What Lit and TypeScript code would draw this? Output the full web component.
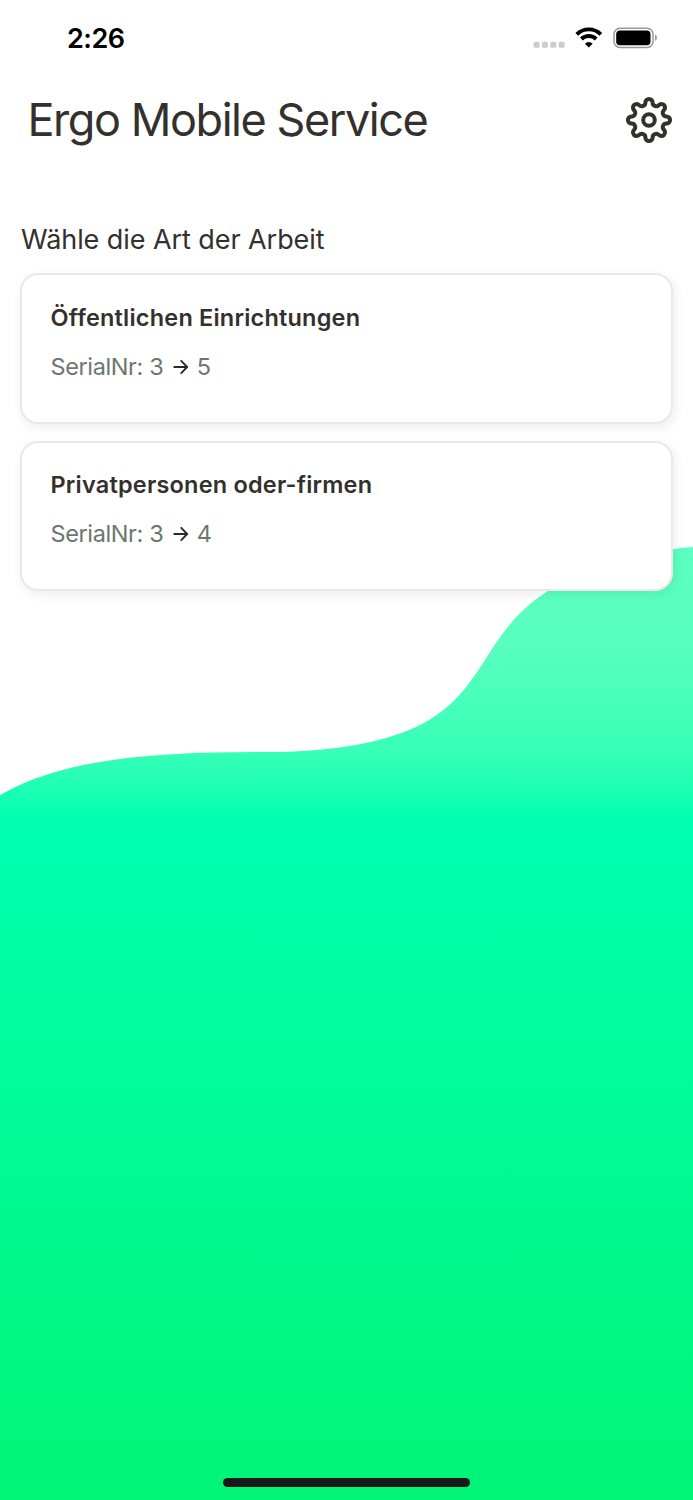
import { LitElement, html, css, svg } from "lit";
import { customElement, property } from "lit/decorators.js";

@customElement("work-card")
class WorkCard extends LitElement {
  @property() heading = "";
  @property() from = "";
  @property() to = "";
  static styles = css`
    :host { display: block; box-sizing: border-box; height: 150.5px; border: 2px solid #e9e9e9; border-radius: 18px;
      background: #fff; box-shadow: 2px 4px 12px rgba(0, 0, 0, 0.07); padding: 26.6px 28px; }
    .title { font-size: 23.5px; line-height: 32px; font-weight: 600; color: #34302d; white-space: nowrap; letter-spacing: 0.2px; padding-left: 0.5px; }
    .serial { display: flex; align-items: center; margin-top: 17px; line-height: 32px; font-size: 23.5px; color: #6c776f; white-space: nowrap; letter-spacing: -0.38px; padding-left: 0.5px; }
    .arrow { width: 16px; height: 16px; margin: 0 8px 0 9.5px; }
  `;
  render() {
    return html`<div class="title">${this.heading}</div>
      <div class="serial"><span>SerialNr: ${this.from}</span>
        <svg class="arrow" viewBox="0 0 16 16" fill="none" stroke="#2c2926" stroke-width="1.8">
          <path d="M1.2 8H14M8.2 1.8 14.2 8 8.2 14.2" stroke-linecap="round" stroke-linejoin="round"/></svg>
        <span>${this.to}</span></div>`;
  }
}

/* Eight round teeth joined by round valleys, all tangent arcs of one radius. */
function gearPath(): string {
  const r = 3.6;
  const tooth = 17.6;
  const valley = 18.8;
  const step = Math.PI / 4;
  const at = (radius: number, angle: number) => [24 + radius * Math.sin(angle), 24 - radius * Math.cos(angle)];
  const join = (toothAngle: number, valleyAngle: number) => {
    const a = at(tooth, toothAngle);
    const b = at(valley, valleyAngle);
    return `${((a[0] + b[0]) / 2).toFixed(2)} ${((a[1] + b[1]) / 2).toFixed(2)}`;
  };
  let d = `M${join(0, -step / 2)}`;
  for (let i = 0; i < 8; i++) {
    const t = i * step;
    d += `A${r} ${r} 0 1 1 ${join(t, t + step / 2)}A${r} ${r} 0 0 0 ${join(t + step, t + step / 2)}`;
  }
  return d + "Z";
}

@customElement("app-root")
class AppRoot extends LitElement {
  static styles = css`
    :host { display: block; position: relative; box-sizing: border-box; width: 693px; height: 1500px; overflow: hidden;
      background: #fff; font-family: Inter, "Liberation Sans", sans-serif; color: #34302d; }
    .wave { position: absolute; inset: 0; width: 693px; height: 1500px; }
    .screen { position: relative; height: 100%; display: flex; flex-direction: column; }
    .status { display: flex; justify-content: space-between; align-items: center; height: 76px; padding: 0 35px 0 67px; box-sizing: border-box; }
    .time { font-size: 27px; font-weight: 600; color: #000; line-height: 32px; letter-spacing: -0.5px; padding-top: 2px; }
    .indicators { width: 126px; height: 30px; }
    .header { display: flex; justify-content: space-between; align-items: center; height: 87px; padding: 0 20px 0 27.5px; }
    .name { margin: 0; font-size: 45px; font-weight: 400; line-height: 56px; white-space: nowrap; letter-spacing: -1.44px; }
    .gear { width: 48px; height: 48px; }
    .label { margin: 59px 0 15px 21px; line-height: 36px; font-size: 27px; white-space: nowrap; letter-spacing: -0.07px; }
    .cards { display: flex; flex-direction: column; gap: 17px; padding: 0 20px; }
    .home { width: 247.5px; height: 8.5px; border-radius: 5px; background: #191919; margin: auto auto 13.5px; }
  `;
  render() {
    return html`
      <svg class="wave" viewBox="0 0 693 1500">
        <defs><linearGradient id="fill" gradientUnits="userSpaceOnUse" x1="0" y1="547" x2="0" y2="1500">
          <stop offset="0" stop-color="#5bffc0"/><stop offset="0.1" stop-color="#59ffbe"/>
          <stop offset="0.213" stop-color="#38ffb7"/><stop offset="0.25" stop-color="#20ffb4"/>
          <stop offset="0.287" stop-color="#00ffb1"/><stop offset="0.35" stop-color="#00ffac"/>
          <stop offset="1" stop-color="#00f576"/></linearGradient></defs>
        <path fill="url(#fill)" d="M0 795C66 757 160 752 266 752C324 752 388 745 430 719.5C455 704 468 686 483 663C501 635 515 612 548 591C585 563 640 551 693 547V1500H0Z"/>
      </svg>
      <div class="screen">
        <div class="status">
          <span class="time">2:26</span>
          <svg class="indicators" viewBox="532 23 126 30">
            ${[533.6, 542, 550.3, 558.6].map((x) => svg`<rect x=${x} y="41.8" width="6" height="6" rx="1.6" fill="#cbcbcb"/>`)}
            <g fill="none" stroke="#000" stroke-width="3.9">
              <path d="M576.8 34.3A17 17 0 0 1 600.8 34.3"/>
              <path d="M581.4 39A10.5 10.5 0 0 1 596.2 39"/></g>
            <path d="M588.8 47.6 584.9 43.7A5.6 5.6 0 0 1 592.7 43.7Z"/>
            <rect x="614" y="28.2" width="39" height="19.2" rx="6" fill="none" stroke="#999" stroke-width="1.5"/>
            <rect x="616.2" y="30.4" width="34.3" height="14.8" rx="3.8"/>
            <path d="M655 34.5Q657 35.5 657 37.8T655 41Z" fill="#999"/>
          </svg>
        </div>
        <header class="header">
          <h1 class="name">Ergo Mobile Service</h1>
          <svg class="gear" viewBox="0 0 48 48" fill="none" stroke="#34302d" stroke-width="4" stroke-linejoin="round">
            <path d=${gearPath()}/><circle cx="24" cy="24" r="5.8"/></svg>
        </header>
        <div class="label">Wähle die Art der Arbeit</div>
        <div class="cards">
          <work-card heading="Öffentlichen Einrichtungen" from="3" to="5"></work-card>
          <work-card heading="Privatpersonen oder-firmen" from="3" to="4"></work-card>
        </div>
        <div class="home"></div>
      </div>`;
  }
}
